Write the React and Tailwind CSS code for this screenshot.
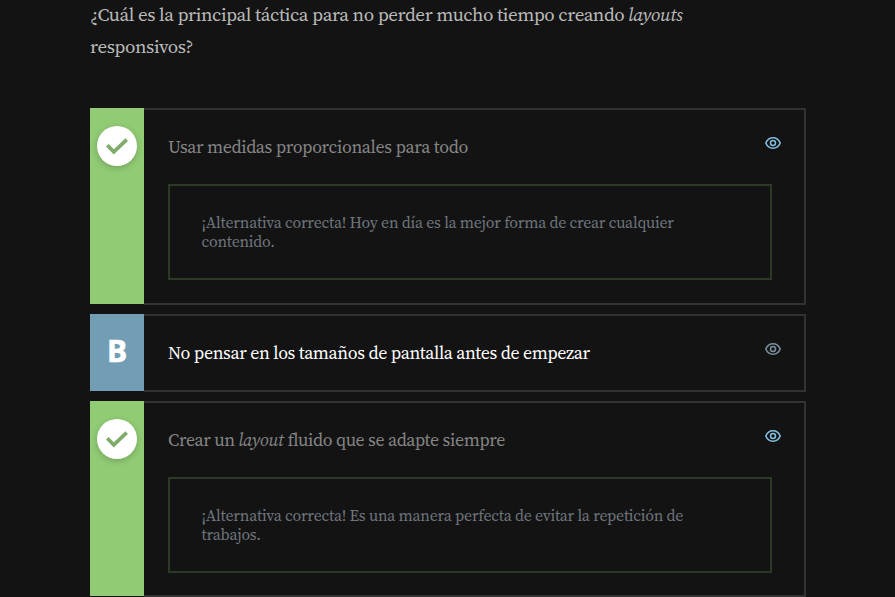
const SERIF = "font-['Source_Serif_4','Source_Serif_Pro','Liberation_Serif',serif]";

function Eye({ className }) {
  return (
    <svg viewBox="0 0 16 12" className={`h-3 w-4 shrink-0 ${className}`} fill="none" stroke="currentColor">
      <path d="M0.8 6C2.1 2.8 4.8 0.8 8 0.8S13.9 2.8 15.2 6C13.9 9.2 11.2 11.2 8 11.2S2.1 9.2 0.8 6Z" strokeWidth="1.6" strokeLinejoin="round" />
      <circle cx="8" cy="6" r="2.5" strokeWidth="1.5" />
    </svg>
  );
}

function Check() {
  return (
    <span className="mt-[18px] flex size-10 items-center justify-center rounded-full bg-white shadow-[0_2px_6px_rgba(0,0,0,0.2)]">
      <svg viewBox="0 0 22 17" className="h-[17px] w-[22px]" fill="none" stroke="#80ac6b" strokeWidth="3.7">
        <path d="M1.3 7.3L7.8 13.8L20.7 1.6" />
      </svg>
    </span>
  );
}

function Card({ marker, markerClass, bodyClass, title, eyeClass, children }) {
  return (
    <section className="flex">
      <div className={`z-10 mb-px flex w-[54px] shrink-0 justify-center ${markerClass}`}>{marker}</div>
      <div className={`flex-1 border-2 border-l-0 border-[#323232] pl-6 ${bodyClass}`}>
        <div className="flex h-[74px] items-start justify-between pr-[23px]">
          <div className="mt-[22px] whitespace-nowrap text-[17.9px] leading-[29px] tracking-[-0.37px]">{title}</div>
          <Eye className={`mt-[27px] ${eyeClass}`} />
        </div>
        {children}
      </div>
    </section>
  );
}

function Feedback({ children }) {
  return (
    <div className="mr-8 h-24 border-2 border-[#2b3a24] pl-[31.5px] pt-[27px] text-[15.8px] leading-[19px] tracking-[-0.22px] text-[#6f757d]">
      {children}
    </div>
  );
}

export default function App() {
  return (
    <main className={`h-[597px] w-full overflow-hidden bg-[#131313] pl-[90px] ${SERIF}`}>
      <div className="w-[716px]">
        <h1 className="-mt-0.5 h-[110px] whitespace-nowrap text-[19px] font-normal leading-8 tracking-[-0.42px] text-[#bababa]">
          <span className="block">
            ¿Cuál es la principal táctica para no perder mucho tiempo creando <em>layouts</em>
          </span>
          <span className="block">responsivos?</span>
        </h1>
        <div className="flex flex-col gap-[9px]">
          <Card
            marker={<Check />}
            markerClass="bg-[#91cb74]"
            bodyClass="h-[197px] text-[#858585]"
            eyeClass="text-[#83bfdf]"
            title={<span>Usar medidas proporcionales para todo</span>}
          >
            <Feedback>
              ¡Alternativa correcta! Hoy en día es la mejor forma de crear cualquier
              <br />
              contenido.
            </Feedback>
          </Card>
          <Card
            marker={<span className="mt-[15px] font-['Open_Sans',sans-serif] text-[30px] font-bold leading-[44px] text-white [-webkit-text-stroke:0.6px_white]">B</span>}
            markerClass="bg-[#719db5]"
            bodyClass="h-[78px] text-white"
            eyeClass="text-[#78909c]"
            title={<span>No pensar en los tamaños de pantalla antes de empezar</span>}
          />
          <Card
            marker={<Check />}
            markerClass="bg-[#91cb74]"
            bodyClass="h-[196px] text-[#858585]"
            eyeClass="text-[#83bfdf]"
            title={<span>Crear un <em>layout</em> fluido que se adapte siempre</span>}
          >
            <Feedback>
              ¡Alternativa correcta! Es una manera perfecta de evitar la repetición de
              <br />
              trabajos.
            </Feedback>
          </Card>
        </div>
      </div>
    </main>
  );
}
